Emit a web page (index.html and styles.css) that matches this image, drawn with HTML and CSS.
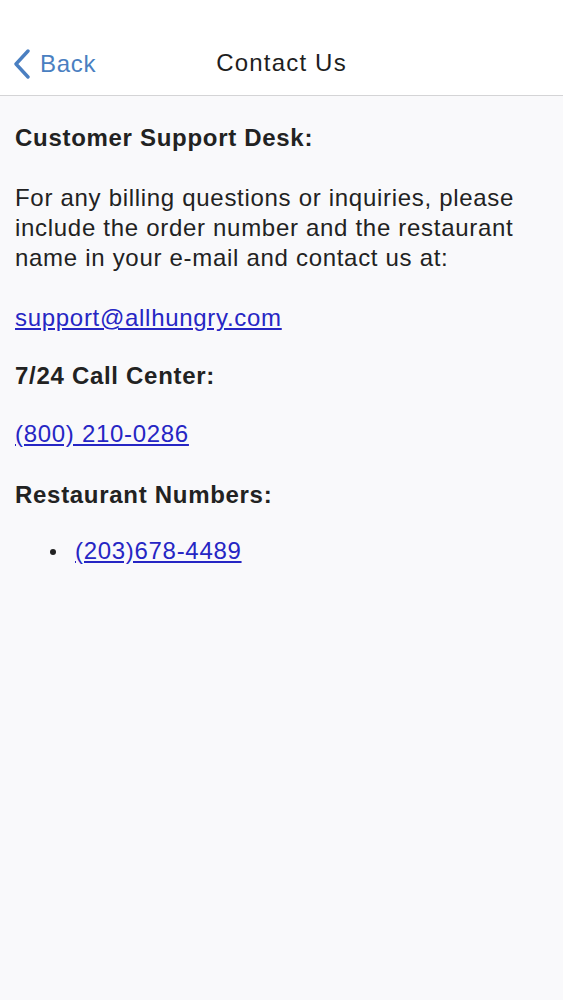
FILE: index.html
```html
<!DOCTYPE html>
<html>
<head>
<meta charset="utf-8">
<link rel="stylesheet" href="styles.css">
</head>
<body>
<header class="navbar">
  <a class="back" href="#">
    <svg class="chev" width="20" height="30" viewBox="0 0 20 30"><path d="M16 2 L4 15 L16 28" fill="none" stroke="#4a7fc1" stroke-width="3.4" stroke-linecap="round" stroke-linejoin="round"/></svg>
    <span>Back</span>
  </a>
  <h1 class="title">Contact Us</h1>
</header>
<main class="content">
  <h2 class="heading">Customer Support Desk:</h2>
  <p class="text">For any billing questions or inquiries, please include the order number and the restaurant name in your e-mail and contact us at:</p>
  <p class="text"><a class="link" href="#">support@allhungry.com</a></p>
  <h2 class="heading h-second">7/24 Call Center:</h2>
  <p class="text t-phone"><a class="link" href="#">(800) 210-0286</a></p>
  <h2 class="heading h-third">Restaurant Numbers:</h2>
  <ul class="list">
    <li class="item"><a class="link" href="#">(203)678-4489</a></li>
  </ul>
</main>
</body>
</html>
```
FILE: styles.css
```css
html, body {
  margin: 0;
  padding: 0;
}
body {
  background: #f9f9fb;
  font-family: "Liberation Sans", Arial, sans-serif;
  color: #222;
  width: 563px;
  min-height: 1000px;
}
.navbar {
  height: 96px;
  background: #ffffff;
  border-bottom: 1px solid #d4d4d6;
  display: flex;
  align-items: center;
  position: relative;
  box-sizing: border-box;
  padding-top: 32px;
}
.back {
  display: flex;
  align-items: center;
  gap: 8px;
  padding-left: 12px;
  color: #4a7fc1;
  text-decoration: none;
  font-size: 24px;
  letter-spacing: 0.7px;
}
.chev {
  display: block;
}
.title {
  position: absolute;
  left: 0;
  right: 0;
  bottom: 18px;
  margin: 0;
  text-align: center;
  font-size: 24px;
  letter-spacing: 1.2px;
  font-weight: normal;
  color: #1e1e1e;
  pointer-events: none;
}
.content {
  padding: 27px 15px 0 15px;
  font-size: 24px;
  line-height: 30px;
  letter-spacing: 0.7px;
}
.heading {
  margin: 0;
  font-size: 24px;
  font-weight: bold;
  color: #222;
}
.h-second {
  margin-top: 28px;
}
.h-third {
  margin-top: 31px;
}
.text {
  margin: 30px 0 0 0;
  color: #222;
}
.t-phone {
  margin-top: 28px;
}
.link {
  color: #2626c4;
  text-decoration: underline;
}
.list {
  margin: 26px 0 0 0;
  padding: 0 0 0 35px;
  list-style: none;
}
.item {
  display: flex;
  align-items: center;
}
.item::before {
  content: "";
  width: 6px;
  height: 6px;
  border-radius: 50%;
  background: #222;
  margin-right: 19px;
  flex: none;
  position: relative;
  top: 1px;
}
```
